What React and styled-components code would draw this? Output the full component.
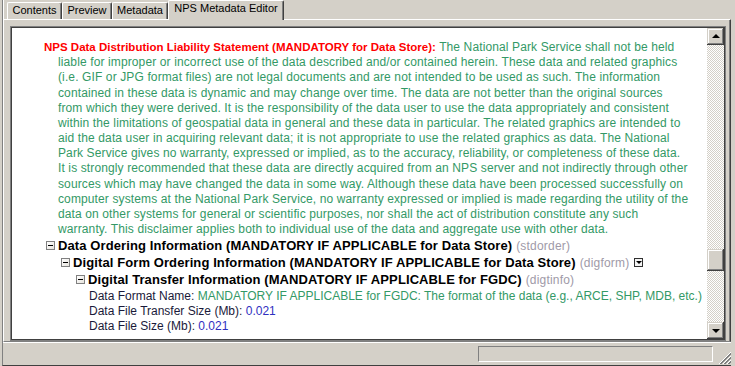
import React from "react";
import styled, { createGlobalStyle } from "styled-components";

const Global = createGlobalStyle`
  html, body { margin: 0; padding: 0; background: #d4d0c8; }
  body { width: 735px; height: 366px; overflow: hidden; font-family: "Liberation Sans", Arial, sans-serif; }
`;

const Window = styled.div`
  width: 735px;
  height: 366px;
  box-sizing: border-box;
  padding: 0 4px 0 2px;
  background: #d4d0c8;
  display: flex;
`;

const Frame = styled.div`
  flex: 1;
  display: flex;
  flex-direction: column;
  border-left: 1px solid #808080;
  border-bottom: 1px solid #404040;
  min-width: 0;
`;

const TabStrip = styled.div`
  height: 19px;
  flex-shrink: 0;
  display: flex;
  align-items: flex-start;
  padding-left: 4px;
  box-shadow: inset 1px 0 #ffffff;
`;

const Tab = styled.div`
  box-sizing: border-box;
  width: ${(p) => p.$w}px;
  height: ${(p) => (p.$active ? 20 : 17)}px;
  margin-top: ${(p) => (p.$active ? 0 : 2)}px;
  position: relative;
  z-index: ${(p) => (p.$active ? 2 : 0)};
  background: #d4d0c8;
  border-top: 1px solid #fff;
  border-left: 1px solid #fff;
  border-right: 1px solid #404040;
  box-shadow: inset -1px 0 #808080;
  border-radius: 2px 2px 0 0;
  font-size: 11px;
  line-height: 13px;
  padding-top: 1px;
  color: #000;
  text-align: center;
  white-space: nowrap;
`;

const Panel = styled.div`
  flex: 1;
  min-height: 0;
  display: flex;
  border-top: 1px solid #fff;
  border-left: 1px solid #fff;
  border-right: 1px solid #404040;
  border-bottom: 1px solid #808080;
  box-shadow: inset -1px 0 #808080;
  padding: 6px 4px 0 6px;
`;

const ContentBox = styled.div`
  flex: 1;
  display: flex;
  border: 1px solid #808080;
  min-width: 0;
`;

const ContentInner = styled.div`
  flex: 1;
  display: flex;
  border: 1px solid #404040;
  background: #fff;
  overflow: hidden;
  min-width: 0;
`;

const Doc = styled.div`
  flex: 1;
  min-width: 0;
  overflow: hidden;
  padding-top: 12px;
  font-size: 12px;
`;

const Para = styled.div`
  padding-left: 46px;
  text-indent: -14px;
  line-height: 15.17px;
  color: #339966;
  white-space: nowrap;
  letter-spacing: ${(p) => p.$ls}px;
`;

const Label = styled.span`
  color: #ff0000;
  font-weight: bold;
  font-size: 11.5px;
  letter-spacing: 0;
`;

const Heading = styled.div`
  display: flex;
  align-items: center;
  height: 17px;
  padding-left: ${(p) => 34 + p.$level * 15}px;
  font-size: 13px;
  font-weight: bold;
  letter-spacing: 0.1px;
  color: #000;
  white-space: nowrap;
`;

const Toggle = styled.span`
  box-sizing: border-box;
  width: 9px;
  height: 9px;
  flex-shrink: 0;
  margin-right: 3px;
  border: 1px solid #808080;
  background: linear-gradient(135deg, #ffffff 0%, #e6e3dc 100%);
  display: flex;
  align-items: center;
  justify-content: center;
  &::after {
    content: "";
    width: 5px;
    height: 1px;
    background: #000;
  }
`;

const Tag = styled.span`
  font-size: 12px;
  font-weight: normal;
  letter-spacing: 0.2px;
  color: #a09aa8;
  margin-left: 4px;
`;

const DropBtn = styled.span`
  box-sizing: border-box;
  width: 9px;
  height: 9px;
  margin-left: 5px;
  border: 1px solid #303030;
  background: #f4f4f4;
  display: flex;
  align-items: center;
  justify-content: center;
  &::after {
    content: "";
    width: 0;
    height: 0;
    border-left: 3px solid transparent;
    border-right: 3px solid transparent;
    border-top: 3px solid #000;
  }
`;

const FieldList = styled.div`
  margin-top: 1px;
`;

const Field = styled.div`
  padding-left: 77px;
  line-height: 15px;
  color: #1a1a3a;
  white-space: nowrap;
`;

const Value = styled.span`
  color: ${(p) => p.$color};
`;

const ScrollBar = styled.div`
  width: 17px;
  flex-shrink: 0;
  display: flex;
  flex-direction: column;
  background: repeating-conic-gradient(#d4d0c8 0 25%, #ffffff 0 50%) 0 0 / 2px 2px;
`;

const raised = `
  box-sizing: border-box;
  background: #d4d0c8;
  box-shadow: inset -1px -1px #404040, inset 1px 1px #d4d0c8, inset -2px -2px #808080, inset 2px 2px #ffffff;
`;

const ScrollButton = styled.div`
  ${raised}
  width: 17px;
  height: 17px;
  flex-shrink: 0;
  display: flex;
  align-items: center;
  justify-content: center;
  &::after {
    content: "";
    width: 0;
    height: 0;
    border-left: 4px solid transparent;
    border-right: 4px solid transparent;
    ${(p) => (p.$dir === "up" ? "border-bottom: 4px solid #000; margin-top: -1px;" : "border-top: 4px solid #000; margin-top: 1px;")}
  }
`;

const Track = styled.div`
  flex: 1;
  display: flex;
  flex-direction: column;
`;

const Thumb = styled.div`
  ${raised}
  width: 17px;
  height: ${(p) => p.$size}px;
  margin-top: ${(p) => p.$offset}px;
`;

const StatusBar = styled.div`
  height: 23px;
  flex-shrink: 0;
  box-sizing: border-box;
  border-top: 1px solid #fff;
  display: flex;
  justify-content: flex-end;
  align-items: flex-start;
  gap: 5px;
  padding-top: 3px;
`;

const StatusField = styled.div`
  box-sizing: border-box;
  width: 235px;
  height: 16px;
  border-top: 1px solid #808080;
  border-left: 1px solid #808080;
  border-bottom: 1px solid #fff;
  border-right: 1px solid #fff;
`;

const Grip = styled.svg`
  align-self: flex-end;
  margin-bottom: 1px;
  display: block;
`;

const lines = [
  "liable for improper or incorrect use of the data described and/or contained herein. These data and related graphics",
  "(i.e. GIF or JPG format files) are not legal documents and are not intended to be used as such. The information",
  "contained in these data is dynamic and may change over time. The data are not better than the original sources",
  "from which they were derived. It is the responsibility of the data user to use the data appropriately and consistent",
  "within the limitations of geospatial data in general and these data in particular. The related graphics are intended to",
  "aid the data user in acquiring relevant data; it is not appropriate to use the related graphics as data. The National",
  "Park Service gives no warranty, expressed or implied, as to the accuracy, reliability, or completeness of these data.",
  "It is strongly recommended that these data are directly acquired from an NPS server and not indirectly through other",
  "sources which may have changed the data in some way. Although these data have been processed successfully on",
  "computer systems at the National Park Service, no warranty expressed or implied is made regarding the utility of the",
  "data on other systems for general or scientific purposes, nor shall the act of distribution constitute any such",
  "warranty. This disclaimer applies both to individual use of the data and aggregate use with other data.",
];

function SizeGrip() {
  const offs = [0, 4, 8];
  return (
    <Grip width="13" height="13" viewBox="0 0 13 13" shapeRendering="crispEdges">
      {offs.map((k) => (
        <g key={k}>
          <path d={`M${1 + k} 13 L13 ${1 + k}`} stroke="#ffffff" strokeWidth="1" />
          <path d={`M${2 + k} 13 L13 ${2 + k}`} stroke="#808080" strokeWidth="1" />
          <path d={`M${3 + k} 13 L13 ${3 + k}`} stroke="#808080" strokeWidth="1" />
        </g>
      ))}
    </Grip>
  );
}

export default function App() {
  return (
    <>
      <Global />
      <Window>
        <Frame>
          <TabStrip>
            <Tab $w={55}>Contents</Tab>
            <Tab $w={50}>Preview</Tab>
            <Tab $w={56}>Metadata</Tab>
            <Tab $w={116} $active>NPS Metadata Editor</Tab>
          </TabStrip>
          <Panel>
            <ContentBox>
              <ContentInner>
                <Doc>
                  <Para $ls={0.12}>
                    <Label>NPS Data Distribution Liability Statement (MANDATORY for Data Store):</Label> The National Park Service shall not be held
                    {lines.map((l, i) => (
                      <React.Fragment key={i}>
                        <br />
                        {l}
                      </React.Fragment>
                    ))}
                  </Para>
                  <Heading $level={0}>
                    <Toggle />
                    Data Ordering Information (MANDATORY IF APPLICABLE for Data Store)
                    <Tag>(stdorder)</Tag>
                  </Heading>
                  <Heading $level={1}>
                    <Toggle />
                    Digital Form Ordering Information (MANDATORY IF APPLICABLE for Data Store)
                    <Tag>(digform)</Tag>
                    <DropBtn />
                  </Heading>
                  <Heading $level={2}>
                    <Toggle />
                    Digital Transfer Information (MANDATORY IF APPLICABLE for FGDC)
                    <Tag>(digtinfo)</Tag>
                  </Heading>
                  <FieldList>
                    <Field>
                      Data Format Name: <Value $color="#339966">MANDATORY IF APPLICABLE for FGDC: The format of the data (e.g., ARCE, SHP, MDB, etc.)</Value>
                    </Field>
                    <Field>
                      Data File Transfer Size (Mb): <Value $color="#2f2fbf">0.021</Value>
                    </Field>
                    <Field>
                      Data File Size (Mb): <Value $color="#2f2fbf">0.021</Value>
                    </Field>
                  </FieldList>
                </Doc>
                <ScrollBar>
                  <ScrollButton $dir="up" />
                  <Track>
                    <Thumb $size={22} $offset={204} />
                  </Track>
                  <ScrollButton $dir="down" />
                </ScrollBar>
              </ContentInner>
            </ContentBox>
          </Panel>
          <StatusBar>
            <StatusField />
            <SizeGrip />
          </StatusBar>
        </Frame>
      </Window>
    </>
  );
}
